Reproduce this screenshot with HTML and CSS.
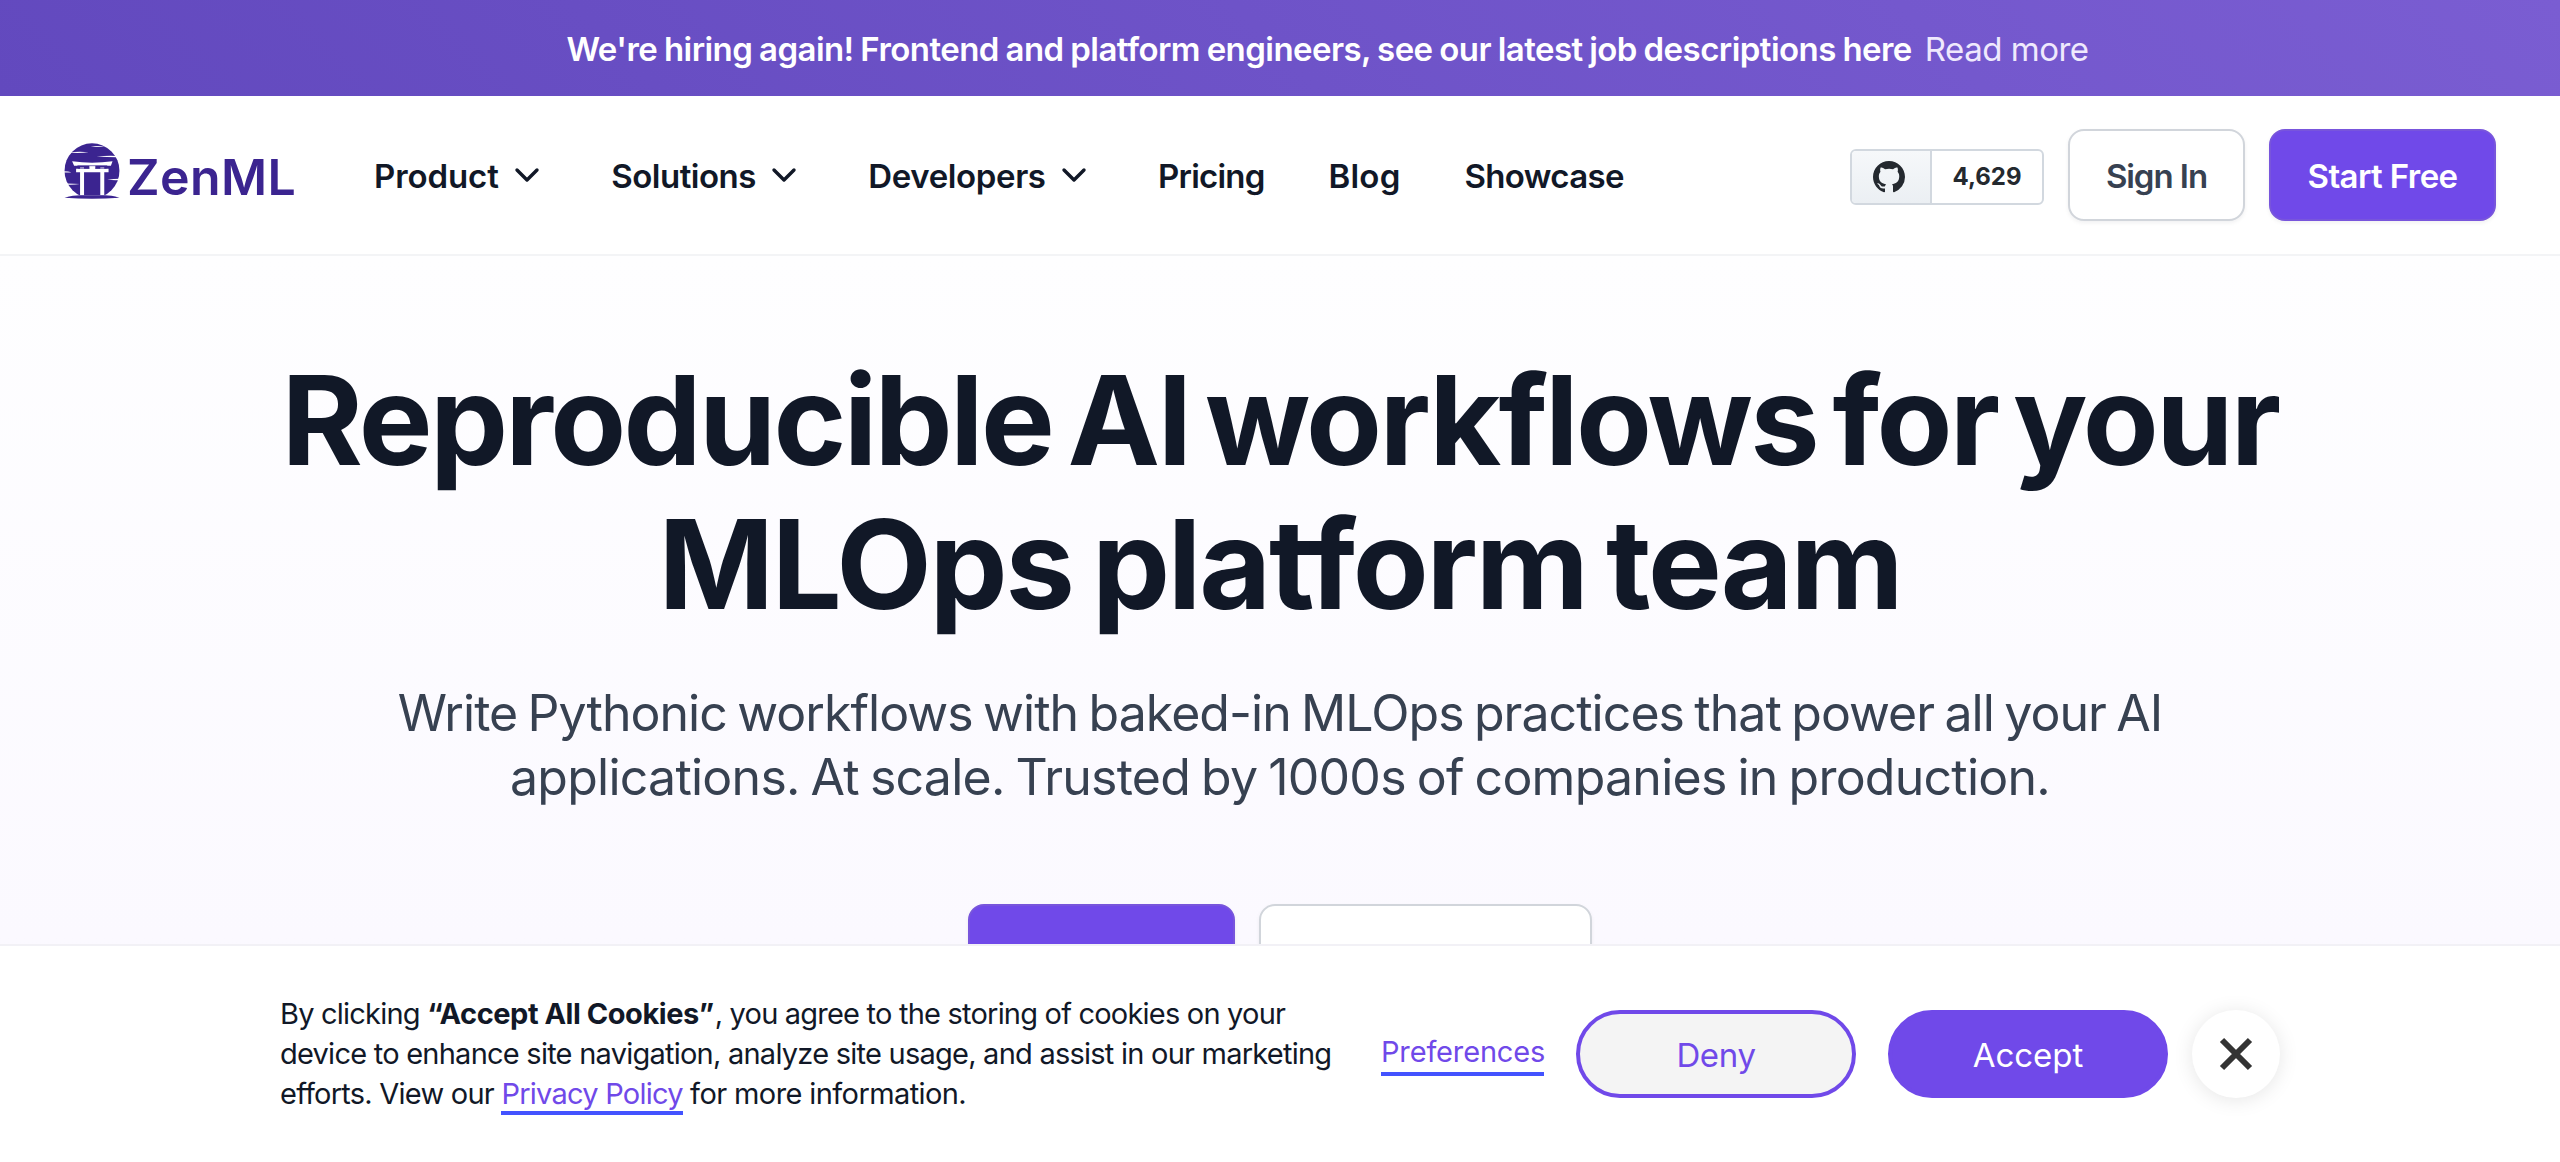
FILE: index.html
```html
<!DOCTYPE html>
<html lang="en">
<head>
<meta charset="utf-8">
<title>ZenML</title>
<link rel="stylesheet" href="styles.css">
</head>
<body>
<div class="announcement">
  <strong class="announcement-text">We're hiring again! Frontend and platform engineers, see our latest job descriptions here</strong>
  <a class="announcement-link">Read more</a>
</div>

<header class="header">
  <a class="logo">
    <svg class="logo-mark" viewBox="0 0 168 172">
      <defs><clipPath id="sun"><path d="M0 0H168V158H0Z"/></clipPath></defs>
      <circle cx="84" cy="84" r="83" fill="#3b2490" clip-path="url(#sun)"/>
      <g fill="#fff">
        <path d="M80 10Q100 8 122 11Q100 14 80 10ZM12 29Q45 24 74 28Q45 32 12 29ZM98 41Q130 37 160 39V43Q130 43 98 41ZM0 85Q12 85 22 88Q12 90 0 89ZM8 122Q30 122 47 124Q30 127 8 126ZM130 111Q150 108 168 108V112Q150 113 130 111Z"/>
        <path d="M24 55Q84 64 146 55L141 69H30ZM36 78H134V88H36ZM76 69H94V80H76ZM48 74H60V158H48ZM109 74H121V158H109Z"/>
      </g>
      <path d="M40 68.500H130M42 76.500H76M94 76.500H128" stroke="#3b2490" stroke-width="2"/>
      <path d="M1 165Q30 158 46 158H124Q140 158 167 165Q84 172 1 165Z" fill="#3b2490"/>
    </svg>
    <span class="logo-name">ZenML</span>
  </a>
  <nav class="nav">
    <a class="nav-item"><span class="t-product">Product</span><svg class="chevron" viewBox="0 0 40 40"><path d="M10 15L20 25L30 15"/></svg></a>
    <a class="nav-item"><span class="t-solutions">Solutions</span><svg class="chevron" viewBox="0 0 40 40"><path d="M10 15L20 25L30 15"/></svg></a>
    <a class="nav-item"><span class="t-developers">Developers</span><svg class="chevron" viewBox="0 0 40 40"><path d="M10 15L20 25L30 15"/></svg></a>
    <a class="nav-item t-pricing">Pricing</a>
    <a class="nav-item t-blog">Blog</a>
    <a class="nav-item t-showcase">Showcase</a>
  </nav>
  <div class="actions">
    <a class="github">
      <span class="github-icon"><svg viewBox="0 0 16 16"><path fill="#24292f" d="M8 0C3.58 0 0 3.58 0 8c0 3.54 2.290 6.530 5.470 7.590.4.070.550-.170.550-.380 0-.190-.010-.820-.010-1.490-2.010.370-2.530-.490-2.690-.940-.090-.230-.480-.940-.820-1.130-.280-.150-.680-.520-.010-.530.630-.010 1.080.580 1.230.820.720 1.210 1.870.870 2.330.660.070-.520.280-.870.510-1.070-1.780-.2-3.640-.890-3.640-3.950 0-.870.310-1.590.820-2.150-.080-.2-.360-1.020.080-2.120 0 0 .670-.210 2.2.820.640-.180 1.320-.270 2-.270s1.360.090 2 .270c1.530-1.040 2.2-.820 2.2-.820.440 1.100.160 1.920.080 2.120.510.560.820 1.270.820 2.150 0 3.070-1.870 3.750-3.650 3.950.290.250.540.730.540 1.480 0 1.070-.010 1.930-.010 2.200 0 .210.150.460.550.380A8.013 8.013 0 0 0 16 8c0-4.420-3.580-8-8-8z"/></svg></span>
      <span class="github-count">4,629</span>
    </a>
    <a class="btn btn-outline btn-signin">Sign In</a>
    <a class="btn btn-primary btn-start">Start Free</a>
  </div>
</header>

<main class="hero">
  <h1 class="title"><span class="line title-1">Reproducible AI workflows for your</span> <span class="line title-2">MLOps platform team</span></h1>
  <p class="subtitle"><span class="line subtitle-1">Write Pythonic workflows with baked-in MLOps practices that power all your AI</span> <span class="line subtitle-2">applications. At scale. Trusted by 1000s of companies in production.</span></p>
  <div class="hero-buttons">
    <a class="btn btn-primary hero-primary"></a>
    <a class="btn btn-outline hero-secondary"></a>
  </div>
</main>

<section class="cookies">
  <p class="cookies-text">
    <span class="line cookies-1">By clicking <b>“Accept All Cookies”</b>, you agree to the storing of cookies on your</span>
    <span class="line cookies-2">device to enhance site navigation, analyze site usage, and assist in our marketing</span>
    <span class="line cookies-3">efforts. View our <a class="link">Privacy Policy</a> <span class="cookies-end">for more information.</span></span>
  </p>
  <a class="preferences">Preferences</a>
  <button class="pill pill-deny">Deny</button>
  <button class="pill pill-accept">Accept</button>
  <button class="close" aria-label="Close"><svg viewBox="0 0 34 34"><path d="M3 3L31 31M31 3L3 31"/></svg></button>
</section>
</body>
</html>
```
FILE: styles.css
```css
* { box-sizing: border-box; }

body {
  margin: 0;
  height: 1162px;
  overflow: hidden;
  font-family: Inter, "Liberation Sans", sans-serif;
  font-size: 33px;
  color: #111827;
  background: #fff;
}

.line { display: block; white-space: nowrap; }

/* Announcement bar */
.announcement {
  display: flex;
  justify-content: center;
  gap: 13px;
  height: 96px;
  padding: 25px 0 0 95px;
  line-height: 48px;
  white-space: nowrap;
  color: #fff;
  background: linear-gradient(45deg, #6249be, #7a5dd2);
}
.announcement-text { font-weight: 600; letter-spacing: -0.55px; word-spacing: -1.1px; }
.announcement-link { color: #efe9fd; letter-spacing: -0.49px; }

/* Header */
.header {
  display: flex;
  align-items: center;
  height: 160px;
  padding: 0 64px;
  border-bottom: 2px solid #f3f4f6;
  background: #fff;
}
.logo { display: flex; align-items: flex-start; width: 310px; height: 64px; color: #3b2490; }
.logo-mark { display: block; flex: none; width: 56px; height: 57px; }
.logo-name {
  margin: 4px 0 0 7px;
  font-size: 50px;
  line-height: 60px;
  font-weight: 600;
  letter-spacing: 0.4px;
}
.nav { display: flex; align-items: center; gap: 64px; font-weight: 600; line-height: 48px; padding-top: 2px; }
.nav-item { display: flex; align-items: center; }
.chevron {
  width: 40px;
  height: 40px;
  margin: -2px 0 0 8.5px;
  fill: none;
  stroke: #111827;
  stroke-width: 3.4;
  stroke-linecap: round;
  stroke-linejoin: round;
}
.t-product { letter-spacing: -0.1px; }
.t-solutions { letter-spacing: -0.5px; }
.t-developers { letter-spacing: -0.38px; }
.t-pricing { letter-spacing: -0.8px; }
.t-blog { letter-spacing: 0.2px; }
.t-showcase { letter-spacing: -0.65px; }

.actions { display: flex; align-items: center; gap: 24px; margin-left: auto; }
.github {
  display: flex;
  width: 194px;
  height: 56px;
  margin-top: 4px;
  border: 2px solid #d2d8df;
  border-radius: 6px;
  overflow: hidden;
  font-size: 24px;
  font-weight: 700;
  color: #24292f;
}
.github-icon {
  display: flex;
  align-items: center;
  justify-content: center;
  width: 80px;
  padding-right: 5px;
  border-right: 2px solid #d2d8df;
  background: linear-gradient(#f6f8fa, #ebeff3);
}
.github-icon svg { width: 32px; height: 32px; }
.github-count { flex: 1; line-height: 52px; text-align: center; }

.btn {
  display: flex;
  align-items: center;
  justify-content: center;
  height: 92px;
  padding-top: 2px;
  border-radius: 16px;
  font-weight: 600;
  white-space: nowrap;
  box-shadow: 0 2px 4px rgba(16, 24, 40, 0.06);
}
.btn-primary { color: #fff; background: #7049e9; border: 2px solid #7855dc; }
.btn-outline { color: #374151; background: #fff; border: 2px solid #d1d5db; }
.btn-signin { width: 177px; letter-spacing: -1.05px; }
.btn-start { width: 227px; letter-spacing: -0.6px; }

/* Hero */
.hero {
  height: 906px;
  padding-top: 92px;
  text-align: center;
  background: linear-gradient(#fefeff, #fbf9ff 75%, #f9f7ff);
}
.title { margin: 0; font-size: 124px; line-height: 144px; font-weight: 700; }
.title-1 { letter-spacing: -2.7px; word-spacing: -11.2px; }
.title-2 { letter-spacing: -2.2px; word-spacing: -8px; }
.subtitle { margin: 45px 0 95px; font-size: 50px; line-height: 64px; color: #374151; }
.subtitle-1 { letter-spacing: -0.95px; word-spacing: -2.8px; }
.subtitle-2 { letter-spacing: -0.75px; word-spacing: -2.4px; }
.hero-buttons { display: flex; justify-content: center; gap: 24px; }
.hero-primary { width: 267px; height: 104px; }
.hero-secondary { width: 333px; height: 104px; }

/* Cookie consent bar pinned over the page */
.cookies {
  position: fixed;
  left: 0;
  right: 0;
  bottom: 0;
  display: flex;
  align-items: center;
  height: 218px;
  padding: 0 280px;
  border-top: 2px solid #f2f1f6;
  background: #fff;
}
.cookies-text { flex: none; width: 1101px; margin: 0; font-size: 29px; line-height: 40px; letter-spacing: -0.76px; }
.cookies-1 { letter-spacing: -0.79px; }
.cookies-1 b { margin-right: 1px; letter-spacing: -0.47px; }
.cookies-end { letter-spacing: -0.6px; }
.link { color: #7049e9; border-bottom: 4px solid #4353ff; }
.preferences {
  flex: none;
  width: 163px;
  height: 44px;
  font-size: 29px;
  line-height: 40px;
  letter-spacing: -0.16px;
  white-space: nowrap;
  color: #7049e9;
  border-bottom: 4px solid #4353ff;
}
.pill {
  flex: none;
  width: 280px;
  height: 88px;
  margin-left: 32px;
  padding: 2px 0 0;
  border: 4px solid #7049e9;
  border-radius: 44px;
  font: 400 33px Inter, "Liberation Sans", sans-serif;
}
.pill-deny { letter-spacing: -0.35px; color: #7049e9; background: #f4f4f4; }
.pill-accept { color: #fff; background: #7049e9; }
.close {
  display: flex;
  align-items: center;
  justify-content: center;
  flex: none;
  width: 88px;
  height: 88px;
  margin-left: 24px;
  padding: 0;
  border: 0;
  border-radius: 50%;
  background: #fff;
  box-shadow: 0 2px 20px rgba(0, 0, 0, 0.1);
}
.close svg { width: 34px; height: 34px; fill: none; stroke: #333; stroke-width: 6; }
```
